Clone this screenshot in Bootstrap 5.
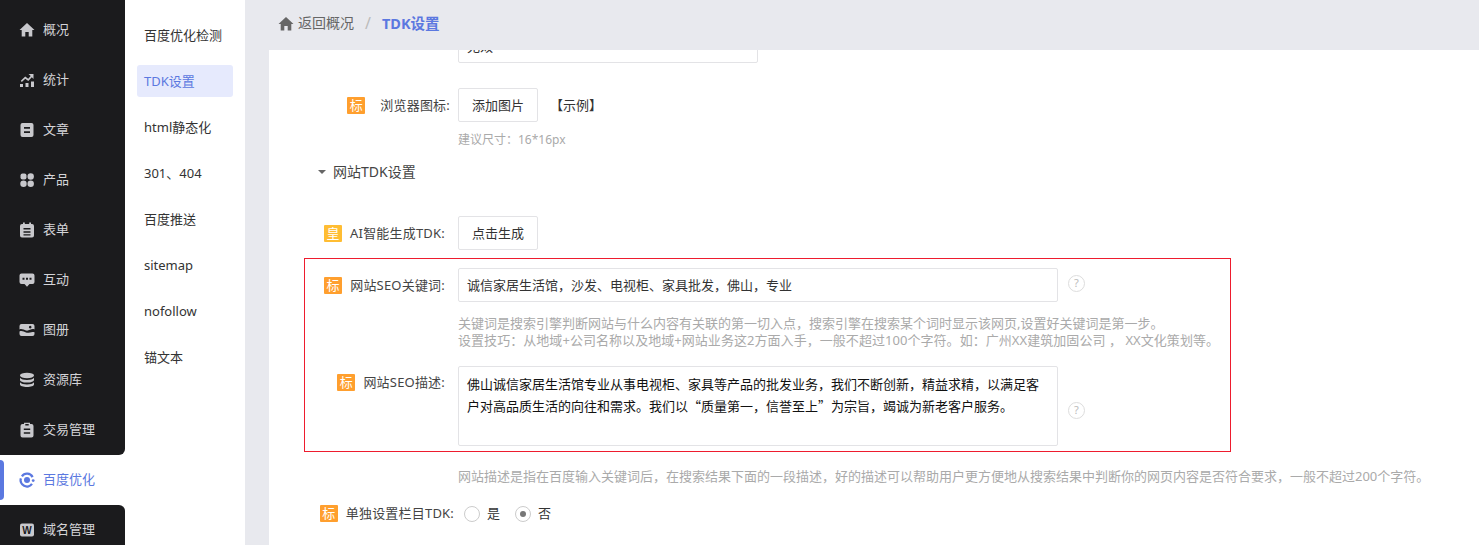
<!DOCTYPE html>
<html lang="zh-CN">
<head>
<meta charset="utf-8">
<title>TDK设置</title>
<link href="https://cdn.jsdelivr.net/npm/bootstrap@5.3.0/dist/css/bootstrap.min.css" rel="stylesheet">
<style>
html,body{height:545px;overflow:hidden;background:#fff}
body{font-family:"Noto Sans","Noto Sans CJK SC",sans-serif;font-size:13px;color:#333;line-height:1.3}
.shell{height:545px;width:1479px}
.rail{width:125px;flex:none;background:#fff;overflow:hidden}
.rail-dark{background:#1b1b1d;padding-top:5px;flex:none}
.rail-dark.top{border-bottom-right-radius:6px}
.rail-dark.bot{padding-top:0;border-top-right-radius:6px;height:50px}
.rail-item{height:50px;flex:none;padding-left:19px;padding-bottom:1px;gap:8px;color:#d4d4d8;font-size:13px;text-decoration:none}
.rail-item svg{width:16px;height:16px;flex:none;fill:#c8c8cc}
.rail-now{color:#5b78e0;position:relative}
.rail-now svg{fill:#5b78e0}
.rail-now svg .arc{fill:none;stroke:#5b78e0;stroke-width:2.300}
.rail-now::before{content:"";position:absolute;left:0;top:5px;width:4px;height:40px;background:#5b78e0;border-radius:0 4px 4px 0}
.sub{width:120px;flex:none;padding:19px 12px 0}
.sub a{display:flex;align-items:center;height:32px;margin-bottom:14px;padding-left:7px;border-radius:3px;color:#333;text-decoration:none;font-size:13px}
.sub a.on{background:#e6eafd;color:#5b78e0}
.mainpane{flex:1;min-width:0;background:#e8e9ee;padding-left:24px}
.crumbbar{height:50px;margin-left:-24px;padding-left:33px;padding-bottom:3px;gap:4px;color:#666;font-size:14px}
.crumbbar svg{width:16px;height:16px;fill:#666}
.crumbbar .sep{color:#bbb;margin:0 7px;font-size:16px}
.crumbbar b{color:#5b78e0;font-size:14.5px;font-weight:700}
.sheet{height:495px;background:#fff;overflow:hidden;position:relative}
.flowbox{margin-top:-21px}
.frow{display:flex}
.flab{width:189px;flex:none;text-align:right;padding-right:13px;display:flex;justify-content:flex-end;align-items:center;color:#444;gap:8px;white-space:nowrap;letter-spacing:.2px}
.flab-wide{padding-right:8px;gap:15px}
.tag{display:inline-flex;align-items:center;justify-content:center;width:18px;height:17px;background:#ff9f2e;color:#fff;border-radius:1px;font-size:13px;line-height:1;flex:none}
.tag.gold{background:#ffbd33}
.fbox{border:1px solid #e3e3e6;border-radius:2px;background:#fff;color:#333;font-size:13px;padding:0 8px;display:flex;align-items:center}
.fbtn{width:80px;height:34px;justify-content:center;padding:0;color:#333}
.hintline{padding-left:189px;color:#aaa;font-size:13px;line-height:17px;white-space:nowrap}
.hint-sm{font-size:12px}
.hint-wide{letter-spacing:.05px}
.qmark{width:17px;height:17px;border:1px solid #ddd;border-radius:50%;color:#bbb;font-size:11px;display:flex;align-items:center;justify-content:center;margin-left:10px;flex:none}
.redbox{margin-left:35px;width:927px;height:194px;border:1px solid #ee1c2e;padding-top:9px;margin-top:8px}
.redbox .flab{width:153px}
.ta{width:600px;height:80px;align-items:flex-start;padding:6px 8px;color:#111;line-height:22px;font-family:"Noto Sans CJK SC",sans-serif}
.radio-ring{width:16px;height:16px;border:1px solid #ccc;border-radius:50%;display:inline-flex;align-items:center;justify-content:center;flex:none}
.radio-ring i{width:6px;height:6px;border-radius:50%;background:#777}
.caret-down{width:0;height:0;border-left:4px solid transparent;border-right:4px solid transparent;border-top:4px solid #666}
.tdkhead{margin:15px 0 0 49px;gap:7px;color:#444;height:18px;font-size:14px}
</style>
</head>
<body>
<div class="shell d-flex">
  <nav class="rail d-flex flex-column">
    <div class="rail-dark top">
      <a class="rail-item d-flex align-items-center" href="#"><svg viewBox="0 0 16 16"><path d="M8 1 .5 8h2.200v6.500h3.600V10h3.400v4.500h3.600V8h2.200z"/></svg>概况</a>
      <a class="rail-item d-flex align-items-center" href="#"><svg viewBox="0 0 16 16"><path d="M9.500 2h5v5l-1.700-1.700-3.500 3.700-3-2.300-3.500 3.200-1-1.200 4.400-4.200 3 2.300 2.500-2.800zM1 12h3v3H1zM6.500 11h3v4h-3zM12 9.500h3V15h-3z"/></svg>统计</a>
      <a class="rail-item d-flex align-items-center" href="#"><svg viewBox="0 0 16 16"><path fill-rule="evenodd" d="M3.500 1h9a2 2 0 0 1 2 2v10a2 2 0 0 1-2 2h-9a2 2 0 0 1-2-2V3a2 2 0 0 1 2-2zM5 5v1.800h6V5zm0 4.200V11h6V9.200z"/></svg>文章</a>
      <a class="rail-item d-flex align-items-center" href="#"><svg viewBox="0 0 16 16"><rect x="1.500" y="1.500" width="6" height="6" rx="2"/><circle cx="11.700" cy="4.500" r="3.200"/><circle cx="4.500" cy="11.700" r="3.200"/><circle cx="11.700" cy="11.700" r="3.200"/></svg>产品</a>
      <a class="rail-item d-flex align-items-center" href="#"><svg viewBox="0 0 16 16"><path fill-rule="evenodd" d="M4 .500h1.800V2h4.400V.500H12V2h1a2 2 0 0 1 2 2v9.500a2 2 0 0 1-2 2H3a2 2 0 0 1-2-2V4a2 2 0 0 1 2-2h1zM4.500 6v1.600h7V6zm0 3.200v1.600h7V9.200zm0 3v1.300h7v-1.300z"/></svg>表单</a>
      <a class="rail-item d-flex align-items-center" href="#"><svg viewBox="0 0 16 16"><path fill-rule="evenodd" d="M2.500 1.500h11a2 2 0 0 1 2 2V10a2 2 0 0 1-2 2h-3L8 14.800 5.500 12h-3a2 2 0 0 1-2-2V3.500a2 2 0 0 1 2-2zM3.500 5.700v2h2v-2zm3.500 0v2h2v-2zm3.500 0v2h2v-2z"/></svg>互动</a>
      <a class="rail-item d-flex align-items-center" href="#"><svg viewBox="0 0 16 16"><path d="M2.500 2h11a2 2 0 0 1 2 2v3.500C12.500 6 10 9.300 7 8.500 5 8 2.500 6.300.5 7.500V4a2 2 0 0 1 2-2zm8.700 1.800a1.300 1.300 0 1 0 .01 0zM.5 9.500c2-1.200 4.500.2 6.500 1 3 1 5.500-1.500 8.500-.2V12a2 2 0 0 1-2 2h-11a2 2 0 0 1-2-2z"/></svg>图册</a>
      <a class="rail-item d-flex align-items-center" href="#"><svg viewBox="0 0 16 16"><ellipse cx="8" cy="3.500" rx="7" ry="2.700"/><path d="M1 5.800C2 7.300 5 8 8 8s6-.7 7-2.200V8c0 1.400-3.100 2.600-7 2.600S1 9.400 1 8z"/><path d="M1 10.300c1 1.500 4 2.200 7 2.200s6-.7 7-2.200v2.200c0 1.400-3.100 2.500-7 2.500s-7-1.100-7-2.500z"/></svg>资源库</a>
      <a class="rail-item d-flex align-items-center" href="#"><svg viewBox="0 0 16 16"><path fill-rule="evenodd" d="M5 .800h6V2h1.500a2 2 0 0 1 2 2v9.500a2 2 0 0 1-2 2h-9a2 2 0 0 1-2-2V4a2 2 0 0 1 2-2H5zM6.300 2v1.500h3.400V2zM4.800 6.500v1.600h6.400V6.500zm0 3.700v1.600h6.400v-1.600z"/></svg>交易管理</a>
    </div>
    <a class="rail-item rail-now d-flex align-items-center" href="#"><svg viewBox="0 0 16 16"><path class="arc" d="M2.900 4.300A6.300 6.300 0 0 1 13.600 5.100"/><path class="arc" d="M13 11.900A6.300 6.300 0 0 1 1.900 6.300"/><circle cx="8" cy="8" r="3"/><circle cx="14.200" cy="8.600" r="1.400"/></svg>百度优化</a>
    <div class="rail-dark bot">
      <a class="rail-item d-flex align-items-center" href="#"><svg viewBox="0 0 16 16"><rect x="1" y="1.500" width="14" height="13" rx="2"/><text x="8" y="11.700" text-anchor="middle" font-family="Liberation Sans" font-weight="700" font-size="10" fill="#1b1b1d">W</text></svg>域名管理</a>
    </div>
  </nav>
  <aside class="sub">
    <a href="#">百度优化检测</a>
    <a href="#" class="on">TDK设置</a>
    <a href="#">html静态化</a>
    <a href="#">301、404</a>
    <a href="#">百度推送</a>
    <a href="#">sitemap</a>
    <a href="#">nofollow</a>
    <a href="#">锚文本</a>
  </aside>
  <main class="mainpane">
    <div class="crumbbar d-flex align-items-center"><svg viewBox="0 0 16 16"><path d="M8 1 .5 8h2.200v6.500h3.600V10h3.400v4.500h3.600V8h2.200z"/></svg>返回概况<span class="sep">/</span><b>TDK设置</b></div>
    <div class="sheet">
      <div class="flowbox">
        <div class="frow"><div class="flab"></div><div class="fbox" style="width:300px;height:34px">无效</div></div>
        <div class="frow" style="margin-top:25px"><div class="flab flab-wide"><span class="tag">标</span>浏览器图标:</div><div class="fbox fbtn">添加图片</div><span class="d-flex align-items-center" style="margin-left:12px;color:#333">【示例】</span></div>
        <div class="hintline hint-sm" style="margin-top:9px">建议尺寸：16*16px</div>
        <div class="tdkhead d-flex align-items-center"><span class="caret-down"></span>网站TDK设置</div>
        <div class="frow" style="margin-top:35px"><div class="flab"><span class="tag gold">皇</span>AI智能生成TDK:</div><div class="fbox fbtn">点击生成</div></div>
        <div class="redbox">
          <div class="frow"><div class="flab"><span class="tag">标</span>网站SEO关键词:</div><div class="fbox" style="width:600px;height:34px">诚信家居生活馆，沙发、电视柜、家具批发，佛山，专业</div><span class="qmark align-self-center" style="margin-top:-4px">?</span></div>
          <div class="hintline" style="padding-left:153px;margin-top:13px">关键词是搜索引擎判断网站与什么内容有关联的第一切入点，搜索引擎在搜索某个词时显示该网页,设置好关键词是第一步。<br><span class="hint-wide">设置技巧：从地域+公司名称以及地域+网站业务这2方面入手，一般不超过100个字符。如：广州XX建筑加固公司 ， XX文化策划等。</span></div>
          <div class="frow" style="margin-top:17px"><div class="flab align-items-start" style="padding-top:8px"><span class="tag">标</span>网站SEO描述:</div><div class="fbox ta">佛山诚信家居生活馆专业从事电视柜、家具等产品的批发业务，我们不断创新，精益求精，以满足客户对高品质生活的向往和需求。我们以“质量第一，信誉至上”为宗旨，竭诚为新老客户服务。</div><span class="qmark align-self-center" style="margin-top:8px">?</span></div>
        </div>
        <div class="hintline" style="margin-top:16px">网站描述是指在百度输入关键词后，在搜索结果下面的一段描述，好的描述可以帮助用户更方便地从搜索结果中判断你的网页内容是否符合要求，一般不超过200个字符。</div>
        <div class="frow align-items-center" style="margin-top:20px"><div class="flab" style="padding-right:4px"><span class="tag">标</span>单独设置栏目TDK:</div><span class="radio-ring" style="margin-left:6px"></span><span style="margin:0 15px 0 7px">是</span><span class="radio-ring"><i></i></span><span style="margin-left:7px">否</span></div>
      </div>
    </div>
  </main>
</div>
<script src="https://cdn.jsdelivr.net/npm/bootstrap@5.3.0/dist/js/bootstrap.bundle.min.js"></script>
</body>
</html>
